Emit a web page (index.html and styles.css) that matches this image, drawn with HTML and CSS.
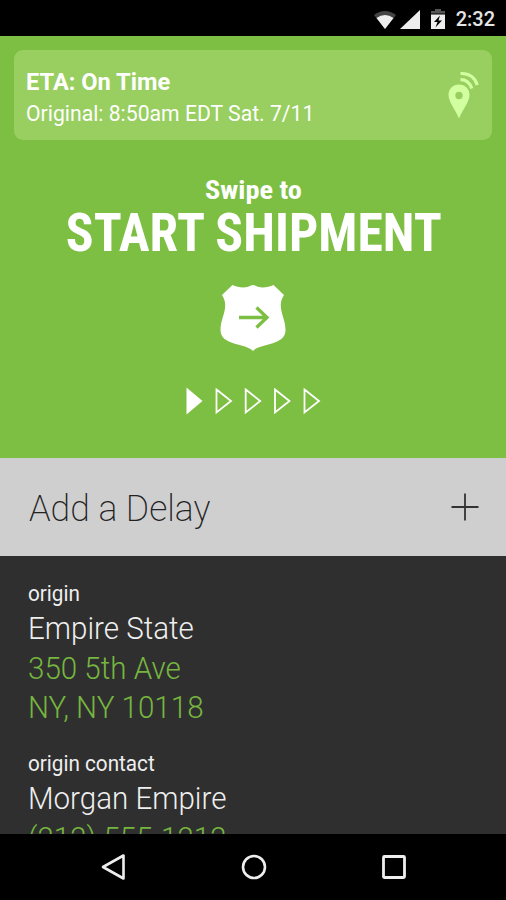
FILE: index.html
```html
<!DOCTYPE html>
<html lang="en">
<head>
<meta charset="utf-8">
<title>Shipment</title>
<link rel="stylesheet" href="styles.css">
</head>
<body>
<div class="phone">
  <header class="status">
    <svg class="status-icons" width="74" height="24" viewBox="0 0 74 24">
      <path d="M1 6Q12-2 23 6L12 20Z" fill="#444"/>
      <path d="M3.500 9Q12 3 20.500 9L12 20Z" fill="#eee"/>
      <path d="M27 20L47 1V20Z" fill="#eee"/>
      <path d="M62 0h6v2h4v2.500H58V2h4Z" fill="#555"/>
      <path d="M58 5.500h14V20H58Z" fill="#eee"/>
      <path d="M67 6.500L61 13h3.500L62.500 18.500L69 11.500h-3.500Z" fill="#000"/>
    </svg>
    <span class="clock">2:32</span>
  </header>
  <main class="content">
    <section class="hero">
      <div class="eta">
        <div class="eta-text">
          <div class="eta-title">ETA: On Time</div>
          <div class="eta-sub">Original: 8:50am EDT Sat. 7/11</div>
        </div>
        <svg class="pin" width="32" height="50" viewBox="0 0 32 50">
          <path fill="#d2ffa0" fill-rule="evenodd" d="M11 13.500C4.800 13.500.5 18 .5 24c0 7 7 14.500 10.500 23.500C14.500 38.500 21.500 31 21.500 24c0-6-4.300-10.500-10.500-10.500ZM11 20.800a3.700 3.700 0 1 1 0 7.400a3.700 3.700 0 1 1 0-7.400Z"/>
          <path fill="none" stroke="#d2ffa0" stroke-width="3.200" d="M12.500 8.700Q20.500 8.500 23.800 17.500M12.500 2.500Q25.500 2 29.300 14"/>
        </svg>
      </div>
      <div class="swipe">Swipe to</div>
      <h1 class="action">START SHIPMENT</h1>
      <svg class="badge" width="66" height="68" viewBox="0 0 66 68">
        <path fill="#fff" d="M12.500 1C18 4 27 4 30 2Q33 .2 36 2C39 4 48 4 53.500 1L64 11C56 23 65.500 33 65.500 46C65.500 62 40 59 33 67C26 59 .5 62 .5 46C.5 33 10 23 2 11Z"/>
        <path fill="none" stroke="#7dbf42" stroke-width="3.300" d="M19 33.500H47M36.500 23.500L47 33.500L36.500 43.500"/>
      </svg>
      <svg class="steps" width="136" height="28" viewBox="0 0 136 28" fill="none" stroke="#fff" stroke-width="1.800">
        <path fill="#fff" stroke="none" d="M1.500 .5L17.500 14L1.500 27.500Z"/>
        <path d="M31.500 2.500L46 14L31.500 25.500ZM60.700 2.500L75.200 14L60.700 25.500ZM90 2.500L104.500 14L90 25.500ZM119.500 2.500L134 14L119.500 25.500Z"/>
      </svg>
    </section>
    <section class="delay">
      <span class="delay-label">Add a Delay</span>
      <svg width="28" height="28" viewBox="0 0 28 28"><path d="M.5 14H27.500M14 .5V27.500" stroke="#333" stroke-width="1.800"/></svg>
    </section>
    <section class="details">
      <div class="group">
        <div class="label">origin</div>
        <div class="value">Empire State</div>
        <div class="value link">350 5th Ave</div>
        <div class="value link">NY, NY 10118</div>
      </div>
      <div class="group">
        <div class="label">origin contact</div>
        <div class="value">Morgan Empire</div>
        <div class="value link">(212) 555-1212</div>
      </div>
    </section>
  </main>
  <nav class="nav">
    <svg width="26" height="28" viewBox="0 0 26 28"><path d="M23.500 2.500V25.500L3 14Z" fill="none" stroke="#eee" stroke-width="2.600" stroke-linejoin="round"/></svg>
    <svg width="26" height="28" viewBox="0 0 26 28"><circle cx="13" cy="14" r="11" fill="none" stroke="#eee" stroke-width="2.600"/></svg>
    <svg width="26" height="28" viewBox="0 0 26 28"><rect x="2.500" y="3.500" width="21" height="21" rx="1" fill="none" stroke="#eee" stroke-width="2.800"/></svg>
  </nav>
</div>
</body>
</html>
```
FILE: styles.css
```css
* { box-sizing: border-box; }
body { margin: 0; background: #000; font-family: Roboto, "Liberation Sans", sans-serif; }
svg { display: block; flex: none; }
.phone { width: 506px; height: 900px; display: flex; flex-direction: column; overflow: hidden; }
.status { height: 36px; flex: none; background: #000; display: flex; align-items: center; justify-content: flex-end; gap: 9px; padding-right: 11px; }
.status-icons { margin-top: 5px; }
.clock { color: #e4e4e4; font-size: 20px; font-weight: 500; line-height: 24px; margin-top: 2px; }
.content { flex: 1; min-height: 0; overflow: hidden; }
.hero { height: 422px; background: #7dbf42; color: #fff; padding: 14px; display: flex; flex-direction: column; align-items: center; }
.eta { width: 478px; height: 90px; flex: none; border-radius: 9px; background: #98cf60; display: flex; justify-content: space-between; align-items: flex-start; padding: 16px 12px 0; }
.eta-title, .eta-sub, .delay-label, .label, .value { transform-origin: left center; white-space: nowrap; }
.eta-title { font-size: 24px; font-weight: 700; line-height: 32px; transform: scaleX(.984); }
.eta-sub { font-size: 22px; line-height: 31px; transform: scaleX(.963); }
.pin { margin: 5px 0 0; }
.swipe { margin-top: 35px; font-size: 26px; line-height: 30px; font-weight: 700; font-stretch: 75%; transform: scaleX(1.09); }
.action { margin: 1px 0 0; font-size: 53px; line-height: 54px; font-weight: 700; font-stretch: 75%; white-space: nowrap; transform: translateX(1px) scaleX(.975); }
.badge { margin-top: 24px; }
.steps { margin-top: 35px; }
.delay { height: 98px; background: #cfcfcf; display: flex; align-items: center; justify-content: space-between; padding: 0 27px 0 29px; }
.delay-label { font-size: 36px; font-weight: 200; color: #222; line-height: 42px; margin-top: 3px; transform: scaleX(.988); }
.details { height: 278px; background: #2f2f2f; color: #eee; padding: 24px 29px 0 28px; display: flex; flex-direction: column; gap: 23px; }
.label { font-size: 22px; line-height: 28px; margin-bottom: 1px; transform: scaleX(.94); }
.value { font-size: 31px; line-height: 39px; font-weight: 300; transform: scaleX(.953); }
.value:nth-child(2) { margin-bottom: 1px; }
.link { color: #76b63f; }
.nav { height: 66px; flex: none; background: #000; display: flex; align-items: center; justify-content: space-between; padding: 0 99px 0 100px; }
```
